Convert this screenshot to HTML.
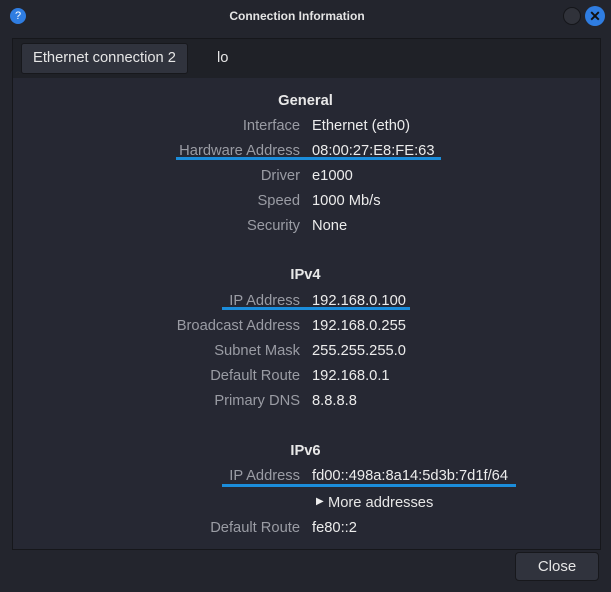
<!DOCTYPE html>
<html><head><style>
*{margin:0;padding:0;box-sizing:border-box}
body{width:611px;height:592px;background:#23252d;font-family:"Liberation Sans",sans-serif;color:#e6e6e6;position:relative;overflow:hidden;font-size:14.7px}
.a{position:absolute;white-space:nowrap}
.l{position:absolute;right:311px;color:#9a9ca4;white-space:nowrap}
.v{position:absolute;left:312px;color:#ececec;white-space:nowrap}
.h{position:absolute;left:0;width:611px;text-align:center;font-weight:bold;color:#e8e8e8}
.u{position:absolute;height:3px;background:#1b8ddb}
</style></head><body>
<div class="a" style="left:10px;top:8px;width:16px;height:16px;border-radius:50%;background:#2f7de1;color:#fff;font-size:11px;text-align:center;line-height:16px">?</div>
<div class="a" style="left:0;width:594px;top:9px;text-align:center;font-weight:bold;font-size:12px;color:#e4e4e4">Connection Information</div>
<div class="a" style="left:563px;top:7px;width:18px;height:18px;border-radius:50%;background:#30323a;border:1px solid #15161a"></div>
<div class="a" style="left:585px;top:6px;width:20px;height:20px;border-radius:50%;background:#2f7de1;color:#111;font-weight:bold;font-size:14px;text-align:center;line-height:20px">✕</div>
<div class="a" style="left:12px;top:38px;width:589px;height:512px;border:1px solid #16171b;background:#262833"></div>
<div class="a" style="left:13px;top:39px;width:587px;height:39px;background:#1f2127"></div>
<div class="a" style="left:21px;top:43px;width:167px;height:31px;background:#30333d;border-radius:3px;border:1px solid #17181c;color:#e6e6e6;text-align:center;line-height:29px">Ethernet connection 2</div>
<div class="a" style="left:217px;top:50px;color:#e6e6e6">lo</div>
<div class="h" style="top:93px">General</div>
<div class="l" style="top:118px">Interface</div><div class="v" style="top:118px">Ethernet (eth0)</div>
<div class="l" style="top:143px">Hardware Address</div><div class="v" style="top:143px">08:00:27:E8:FE:63</div>
<div class="u" style="left:176px;top:157px;width:265px"></div>
<div class="l" style="top:168px">Driver</div><div class="v" style="top:168px">e1000</div>
<div class="l" style="top:193px">Speed</div><div class="v" style="top:193px">1000 Mb/s</div>
<div class="l" style="top:218px">Security</div><div class="v" style="top:218px">None</div>
<div class="h" style="top:267px">IPv4</div>
<div class="l" style="top:293px">IP Address</div><div class="v" style="top:293px">192.168.0.100</div>
<div class="u" style="left:222px;top:307px;width:188px"></div>
<div class="l" style="top:318px">Broadcast Address</div><div class="v" style="top:318px">192.168.0.255</div>
<div class="l" style="top:343px">Subnet Mask</div><div class="v" style="top:343px">255.255.255.0</div>
<div class="l" style="top:368px">Default Route</div><div class="v" style="top:368px">192.168.0.1</div>
<div class="l" style="top:393px">Primary DNS</div><div class="v" style="top:393px">8.8.8.8</div>
<div class="h" style="top:443px">IPv6</div>
<div class="l" style="top:468px">IP Address</div><div class="v" style="top:468px">fd00::498a:8a14:5d3b:7d1f/64</div>
<div class="u" style="left:222px;top:484px;width:294px"></div>
<div class="a" style="left:316px;top:496px;font-size:10px;color:#eee">▶</div>
<div class="a" style="left:328px;top:495px;color:#e6e6e6">More addresses</div>
<div class="l" style="top:520px">Default Route</div><div class="v" style="top:520px">fe80::2</div>
<div class="a" style="left:515px;top:552px;width:84px;height:29px;background:#30333d;border:1px solid #17181c;border-radius:4px;text-align:center;line-height:27px;font-size:15px;color:#e6e6e6">Close</div>
</body></html>
